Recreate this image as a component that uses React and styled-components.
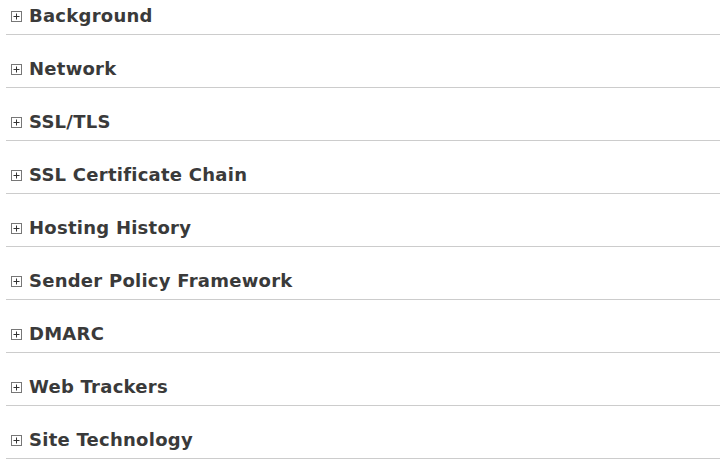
import styled, { createGlobalStyle } from "styled-components";

const GlobalStyle = createGlobalStyle`
  html, body {
    margin: 0;
    padding: 0;
    background: #ffffff;
    overflow: hidden;
  }
`;

const StyledList = styled.section`
  display: flex;
  flex-direction: column;
  margin-left: 6px;
  width: 714px;
`;

const StyledSection = styled.div`
  display: flex;
  align-items: center;
  gap: 7px;
  padding: 23px 0 7px 5px;
  border-bottom: 1px solid #cccccc;

  &:first-child {
    padding-top: 5px;
  }
`;

const StyledTitle = styled.h3`
  margin: 0;
  font-family: "DejaVu Sans", Verdana, sans-serif;
  font-size: 18px;
  line-height: 22px;
  font-weight: 700;
  letter-spacing: 0.25px;
  color: #3a3a3a;
`;

const StyledToggle = styled.svg`
  flex: none;
  width: 11px;
  height: 11px;
`;

function PlusBox() {
  return (
    <StyledToggle viewBox="0 0 11 11">
      <rect x="0.5" y="0.5" width="10" height="10" fill="#fff" stroke="#777" />
      <path d="M2.5 5.5h6M5.5 2.5v6" stroke="#333" strokeWidth="1" />
    </StyledToggle>
  );
}

const sections = [
  "Background",
  "Network",
  "SSL/TLS",
  "SSL Certificate Chain",
  "Hosting History",
  "Sender Policy Framework",
  "DMARC",
  "Web Trackers",
  "Site Technology",
];

export default function App() {
  return (
    <>
      <GlobalStyle />
      <StyledList>
        {sections.map((title) => (
          <StyledSection key={title}>
            <PlusBox />
            <StyledTitle>{title}</StyledTitle>
          </StyledSection>
        ))}
      </StyledList>
    </>
  );
}
